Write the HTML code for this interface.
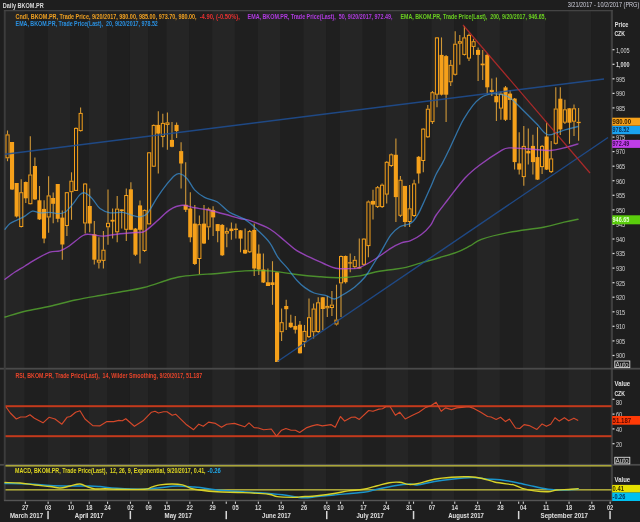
<!DOCTYPE html>
<html><head><meta charset="utf-8"><style>
html,body{margin:0;padding:0;background:#1e1e1e;width:640px;height:522px;overflow:hidden}
svg{display:block;will-change:transform}
#w{}
text{font-family:"Liberation Sans",sans-serif}
.ax{font-size:6.3px;fill:#d8d8d8}
.axl{font-size:6.3px;fill:#e0e0e0;font-weight:bold}
.bx{font-size:6.4px;font-weight:bold}
.xl{font-size:6.4px;fill:#d8d8d8;font-weight:bold}
.ml{font-size:6.6px;fill:#e0e0e0;font-weight:bold}
.lg{font-size:6.6px;font-weight:bold}
.lgn{font-size:6.6px}
</style></head><body><div id="w">
<svg width="640" height="522" viewBox="0 0 640 522">
<rect width="640" height="522" fill="#1e1e1e"/>
<rect x="5" y="11" width="19.8" height="490" fill="#252525"/>
<rect x="24.8" y="11" width="22.8" height="490" fill="#1f1f1f"/>
<rect x="47.6" y="11" width="22.8" height="490" fill="#252525"/>
<rect x="70.5" y="11" width="18.3" height="490" fill="#1f1f1f"/>
<rect x="88.7" y="11" width="18.3" height="490" fill="#252525"/>
<rect x="107" y="11" width="22.8" height="490" fill="#1f1f1f"/>
<rect x="129.9" y="11" width="18.3" height="490" fill="#252525"/>
<rect x="148.1" y="11" width="18.3" height="490" fill="#1f1f1f"/>
<rect x="166.4" y="11" width="22.8" height="490" fill="#252525"/>
<rect x="189.3" y="11" width="22.8" height="490" fill="#1f1f1f"/>
<rect x="212.1" y="11" width="22.8" height="490" fill="#252525"/>
<rect x="234.9" y="11" width="22.8" height="490" fill="#1f1f1f"/>
<rect x="257.8" y="11" width="22.8" height="490" fill="#252525"/>
<rect x="280.6" y="11" width="22.8" height="490" fill="#1f1f1f"/>
<rect x="303.5" y="11" width="22.8" height="490" fill="#252525"/>
<rect x="326.3" y="11" width="13.7" height="490" fill="#1f1f1f"/>
<rect x="340" y="11" width="22.8" height="490" fill="#252525"/>
<rect x="362.9" y="11" width="22.8" height="490" fill="#1f1f1f"/>
<rect x="385.7" y="11" width="22.8" height="490" fill="#252525"/>
<rect x="408.6" y="11" width="22.8" height="490" fill="#1f1f1f"/>
<rect x="431.4" y="11" width="22.8" height="490" fill="#252525"/>
<rect x="454.2" y="11" width="22.8" height="490" fill="#1f1f1f"/>
<rect x="477.1" y="11" width="22.8" height="490" fill="#252525"/>
<rect x="499.9" y="11" width="22.8" height="490" fill="#1f1f1f"/>
<rect x="522.8" y="11" width="22.8" height="490" fill="#252525"/>
<rect x="545.6" y="11" width="22.8" height="490" fill="#1f1f1f"/>
<rect x="568.5" y="11" width="22.8" height="490" fill="#252525"/>
<rect x="591.3" y="11" width="18.3" height="490" fill="#1f1f1f"/>
<rect x="609.6" y="11" width="2.4" height="490" fill="#252525"/>
<rect x="0" y="367.8" width="640" height="1.8" fill="#4a4a4a"/>
<rect x="0" y="463.9" width="640" height="1.8" fill="#4a4a4a"/>
<rect x="3.8" y="10" width="1.9" height="491" fill="#3c3c3c"/>
<rect x="4" y="10" width="608.5" height="1.3" fill="#444"/>
<rect x="611.3" y="10" width="1.4" height="491.2" fill="#4a4a4a"/>
<rect x="4" y="499.8" width="608.5" height="1.4" fill="#555"/>
<rect x="612.5" y="354.9" width="2" height="1.2" fill="#ddd"/>
<rect x="612.5" y="340.3" width="2" height="1.2" fill="#ddd"/>
<rect x="612.5" y="325.7" width="2" height="1.2" fill="#ddd"/>
<rect x="612.5" y="311.2" width="2" height="1.2" fill="#ddd"/>
<rect x="612.5" y="296.6" width="2" height="1.2" fill="#ddd"/>
<rect x="612.5" y="282.1" width="2" height="1.2" fill="#ddd"/>
<rect x="612.5" y="267.5" width="2" height="1.2" fill="#ddd"/>
<rect x="612.5" y="252.9" width="2" height="1.2" fill="#ddd"/>
<rect x="612.5" y="238.4" width="2" height="1.2" fill="#ddd"/>
<rect x="612.5" y="223.8" width="2" height="1.2" fill="#ddd"/>
<rect x="612.5" y="209.3" width="2" height="1.2" fill="#ddd"/>
<rect x="612.5" y="194.7" width="2" height="1.2" fill="#ddd"/>
<rect x="612.5" y="180.1" width="2" height="1.2" fill="#ddd"/>
<rect x="612.5" y="165.6" width="2" height="1.2" fill="#ddd"/>
<rect x="612.5" y="151" width="2" height="1.2" fill="#ddd"/>
<rect x="612.5" y="136.5" width="2" height="1.2" fill="#ddd"/>
<rect x="612.5" y="121.9" width="2" height="1.2" fill="#ddd"/>
<rect x="612.5" y="107.3" width="2" height="1.2" fill="#ddd"/>
<rect x="612.5" y="92.8" width="2" height="1.2" fill="#ddd"/>
<rect x="612.5" y="78.2" width="2" height="1.2" fill="#ddd"/>
<rect x="612.5" y="63.7" width="2" height="1.2" fill="#ddd"/>
<rect x="612.5" y="49.1" width="2" height="1.2" fill="#ddd"/>
<text x="615.9" y="358.3" class="ax" textLength="9.2" lengthAdjust="spacingAndGlyphs">900</text>
<text x="615.9" y="343.7" class="ax" textLength="9.2" lengthAdjust="spacingAndGlyphs">905</text>
<text x="615.9" y="329.1" class="ax" textLength="9.2" lengthAdjust="spacingAndGlyphs">910</text>
<text x="615.9" y="314.6" class="ax" textLength="9.2" lengthAdjust="spacingAndGlyphs">915</text>
<text x="615.9" y="300" class="ax" textLength="9.2" lengthAdjust="spacingAndGlyphs">920</text>
<text x="615.9" y="285.5" class="ax" textLength="9.2" lengthAdjust="spacingAndGlyphs">925</text>
<text x="615.9" y="270.9" class="ax" textLength="9.2" lengthAdjust="spacingAndGlyphs">930</text>
<text x="615.9" y="256.3" class="ax" textLength="9.2" lengthAdjust="spacingAndGlyphs">935</text>
<text x="615.9" y="241.8" class="ax" textLength="9.2" lengthAdjust="spacingAndGlyphs">940</text>
<text x="615.9" y="227.2" class="ax" textLength="9.2" lengthAdjust="spacingAndGlyphs">945</text>
<text x="615.9" y="212.7" class="ax" textLength="9.2" lengthAdjust="spacingAndGlyphs">950</text>
<text x="615.9" y="198.1" class="ax" textLength="9.2" lengthAdjust="spacingAndGlyphs">955</text>
<text x="615.9" y="183.5" class="ax" textLength="9.2" lengthAdjust="spacingAndGlyphs">960</text>
<text x="615.9" y="169" class="ax" textLength="9.2" lengthAdjust="spacingAndGlyphs">965</text>
<text x="615.9" y="154.4" class="ax" textLength="9.2" lengthAdjust="spacingAndGlyphs">970</text>
<text x="615.9" y="139.9" class="ax" textLength="9.2" lengthAdjust="spacingAndGlyphs">975</text>
<text x="615.9" y="125.3" class="ax" textLength="9.2" lengthAdjust="spacingAndGlyphs">980</text>
<text x="615.9" y="110.7" class="ax" textLength="9.2" lengthAdjust="spacingAndGlyphs">985</text>
<text x="615.9" y="96.2" class="ax" textLength="9.2" lengthAdjust="spacingAndGlyphs">990</text>
<text x="615.9" y="81.6" class="ax" textLength="9.2" lengthAdjust="spacingAndGlyphs">995</text>
<text x="615.9" y="67.1" class="ax" textLength="13.8" lengthAdjust="spacingAndGlyphs" font-weight="bold">1,000</text>
<text x="615.9" y="52.5" class="ax" textLength="13.8" lengthAdjust="spacingAndGlyphs">1,005</text>
<line x1="7.5" y1="130.5" x2="7.5" y2="134.4" stroke="#d09838" stroke-width="1.1"/>
<line x1="7.5" y1="158.3" x2="7.5" y2="161.2" stroke="#d09838" stroke-width="1.1"/>
<rect x="6" y="134.9" width="3.1" height="22.9" fill="none" stroke="#f5a01a" stroke-width="1"/>
<line x1="12.1" y1="142" x2="12.1" y2="190" stroke="#d09838" stroke-width="1.1"/>
<rect x="10" y="142" width="4.1" height="47.5" fill="#f5a01a"/>
<line x1="16.6" y1="183" x2="16.6" y2="217.5" stroke="#d09838" stroke-width="1.1"/>
<rect x="14.6" y="183" width="4.1" height="33.5" fill="#f5a01a"/>
<line x1="21.2" y1="179.3" x2="21.2" y2="192.2" stroke="#d09838" stroke-width="1.1"/>
<line x1="21.2" y1="227" x2="21.2" y2="227.5" stroke="#d09838" stroke-width="1.1"/>
<rect x="19.7" y="192.7" width="3.1" height="33.8" fill="none" stroke="#f5a01a" stroke-width="1"/>
<line x1="25.8" y1="181.5" x2="25.8" y2="203" stroke="#d09838" stroke-width="1.1"/>
<rect x="23.7" y="182" width="4.1" height="16.3" fill="#f5a01a"/>
<line x1="30.3" y1="136.3" x2="30.3" y2="174.5" stroke="#d09838" stroke-width="1.1"/>
<line x1="30.3" y1="204.2" x2="30.3" y2="204.5" stroke="#d09838" stroke-width="1.1"/>
<rect x="28.8" y="175" width="3.1" height="28.7" fill="none" stroke="#f5a01a" stroke-width="1"/>
<line x1="34.9" y1="157.4" x2="34.9" y2="200" stroke="#d09838" stroke-width="1.1"/>
<rect x="32.9" y="166" width="4.1" height="33.4" fill="#f5a01a"/>
<line x1="39.5" y1="186" x2="39.5" y2="220" stroke="#d09838" stroke-width="1.1"/>
<rect x="37.4" y="200.3" width="4.1" height="19.1" fill="#f5a01a"/>
<line x1="44.1" y1="200.2" x2="44.1" y2="243.3" stroke="#d09838" stroke-width="1.1"/>
<rect x="42" y="208.9" width="4.1" height="29.6" fill="#f5a01a"/>
<line x1="48.6" y1="176.3" x2="48.6" y2="195.4" stroke="#d09838" stroke-width="1.1"/>
<line x1="48.6" y1="217.5" x2="48.6" y2="232.8" stroke="#d09838" stroke-width="1.1"/>
<rect x="47.1" y="195.9" width="3.1" height="21.1" fill="none" stroke="#f5a01a" stroke-width="1"/>
<line x1="53.2" y1="192.5" x2="53.2" y2="223.3" stroke="#d09838" stroke-width="1.1"/>
<rect x="51.1" y="198" width="4.1" height="5.8" fill="#f5a01a"/>
<line x1="57.8" y1="184" x2="57.8" y2="222.3" stroke="#d09838" stroke-width="1.1"/>
<rect x="55.7" y="184" width="4.1" height="34.8" fill="#f5a01a"/>
<line x1="62.3" y1="210.5" x2="62.3" y2="259.7" stroke="#d09838" stroke-width="1.1"/>
<rect x="60.3" y="217.6" width="4.1" height="26.9" fill="#f5a01a"/>
<line x1="66.9" y1="192" x2="66.9" y2="192.2" stroke="#d09838" stroke-width="1.1"/>
<line x1="66.9" y1="226" x2="66.9" y2="236" stroke="#d09838" stroke-width="1.1"/>
<rect x="65.3" y="192.7" width="3.1" height="32.8" fill="none" stroke="#f5a01a" stroke-width="1"/>
<line x1="71.5" y1="172.3" x2="71.5" y2="180.7" stroke="#d09838" stroke-width="1.1"/>
<line x1="71.5" y1="192.2" x2="71.5" y2="219.8" stroke="#d09838" stroke-width="1.1"/>
<rect x="69.9" y="181.2" width="3.1" height="10.5" fill="none" stroke="#f5a01a" stroke-width="1"/>
<line x1="76" y1="127.5" x2="76" y2="127.9" stroke="#d09838" stroke-width="1.1"/>
<line x1="76" y1="190.9" x2="76" y2="191" stroke="#d09838" stroke-width="1.1"/>
<rect x="74.5" y="128.4" width="3.1" height="62" fill="none" stroke="#f5a01a" stroke-width="1"/>
<line x1="80.6" y1="107.4" x2="80.6" y2="112.9" stroke="#d09838" stroke-width="1.1"/>
<line x1="80.6" y1="131.1" x2="80.6" y2="131.5" stroke="#d09838" stroke-width="1.1"/>
<rect x="79.1" y="113.4" width="3.1" height="17.2" fill="none" stroke="#f5a01a" stroke-width="1"/>
<line x1="85.2" y1="183" x2="85.2" y2="183.5" stroke="#d09838" stroke-width="1.1"/>
<line x1="85.2" y1="223.5" x2="85.2" y2="233.5" stroke="#d09838" stroke-width="1.1"/>
<rect x="83.6" y="184" width="3.1" height="39" fill="none" stroke="#f5a01a" stroke-width="1"/>
<line x1="89.7" y1="188.4" x2="89.7" y2="232.3" stroke="#d09838" stroke-width="1.1"/>
<rect x="87.7" y="206" width="4.1" height="17.5" fill="#f5a01a"/>
<line x1="94.3" y1="221" x2="94.3" y2="264.6" stroke="#d09838" stroke-width="1.1"/>
<rect x="92.3" y="234.3" width="4.1" height="25.4" fill="#f5a01a"/>
<line x1="98.9" y1="237.2" x2="98.9" y2="259.7" stroke="#d09838" stroke-width="1.1"/>
<line x1="98.9" y1="262.6" x2="98.9" y2="268.4" stroke="#d09838" stroke-width="1.1"/>
<rect x="97.3" y="260.2" width="3.1" height="1.9" fill="none" stroke="#f5a01a" stroke-width="1"/>
<line x1="103.4" y1="231" x2="103.4" y2="249.7" stroke="#d09838" stroke-width="1.1"/>
<line x1="103.4" y1="260.9" x2="103.4" y2="268.4" stroke="#d09838" stroke-width="1.1"/>
<rect x="101.9" y="250.2" width="3.1" height="10.2" fill="none" stroke="#f5a01a" stroke-width="1"/>
<line x1="108" y1="189.6" x2="108" y2="222.8" stroke="#d09838" stroke-width="1.1"/>
<line x1="108" y1="227.3" x2="108" y2="244.7" stroke="#d09838" stroke-width="1.1"/>
<rect x="106.5" y="223.3" width="3.1" height="3.5" fill="none" stroke="#f5a01a" stroke-width="1"/>
<line x1="112.6" y1="208.6" x2="112.6" y2="238.5" stroke="#d09838" stroke-width="1.1"/>
<rect x="110.5" y="219.8" width="4.1" height="1.8" fill="#f5a01a"/>
<line x1="117.2" y1="195.9" x2="117.2" y2="208.6" stroke="#d09838" stroke-width="1.1"/>
<line x1="117.2" y1="232.3" x2="117.2" y2="242.2" stroke="#d09838" stroke-width="1.1"/>
<rect x="115.6" y="209.1" width="3.1" height="22.7" fill="none" stroke="#f5a01a" stroke-width="1"/>
<line x1="121.7" y1="209" x2="121.7" y2="209.4" stroke="#d09838" stroke-width="1.1"/>
<line x1="121.7" y1="211.1" x2="121.7" y2="228.5" stroke="#d09838" stroke-width="1.1"/>
<rect x="120.2" y="209.9" width="3.1" height="0.7" fill="none" stroke="#f5a01a" stroke-width="1"/>
<line x1="126.3" y1="188.4" x2="126.3" y2="195" stroke="#d09838" stroke-width="1.1"/>
<line x1="126.3" y1="229.8" x2="126.3" y2="241" stroke="#d09838" stroke-width="1.1"/>
<rect x="124.7" y="195.5" width="3.1" height="33.8" fill="none" stroke="#f5a01a" stroke-width="1"/>
<line x1="130.9" y1="182.3" x2="130.9" y2="230" stroke="#d09838" stroke-width="1.1"/>
<rect x="128.8" y="189.3" width="4.1" height="40.5" fill="#f5a01a"/>
<line x1="135.4" y1="228" x2="135.4" y2="256" stroke="#d09838" stroke-width="1.1"/>
<rect x="133.4" y="228.6" width="4.1" height="26.1" fill="#f5a01a"/>
<line x1="140" y1="200.4" x2="140" y2="263.4" stroke="#d09838" stroke-width="1.1"/>
<rect x="138" y="205.4" width="4.1" height="24.4" fill="#f5a01a"/>
<line x1="144.6" y1="209.5" x2="144.6" y2="209.9" stroke="#d09838" stroke-width="1.1"/>
<line x1="144.6" y1="251" x2="144.6" y2="252" stroke="#d09838" stroke-width="1.1"/>
<rect x="143" y="210.4" width="3.1" height="40.1" fill="none" stroke="#f5a01a" stroke-width="1"/>
<line x1="149.1" y1="152" x2="149.1" y2="152.3" stroke="#d09838" stroke-width="1.1"/>
<line x1="149.1" y1="224.4" x2="149.1" y2="224.5" stroke="#d09838" stroke-width="1.1"/>
<rect x="147.6" y="152.8" width="3.1" height="71.1" fill="none" stroke="#f5a01a" stroke-width="1"/>
<line x1="153.7" y1="124.5" x2="153.7" y2="124.9" stroke="#d09838" stroke-width="1.1"/>
<line x1="153.7" y1="166.7" x2="153.7" y2="167" stroke="#d09838" stroke-width="1.1"/>
<rect x="152.2" y="125.4" width="3.1" height="40.8" fill="none" stroke="#f5a01a" stroke-width="1"/>
<line x1="158.3" y1="111.2" x2="158.3" y2="173.5" stroke="#d09838" stroke-width="1.1"/>
<rect x="156.2" y="124.9" width="4.1" height="8.7" fill="#f5a01a"/>
<line x1="162.8" y1="113.7" x2="162.8" y2="122.9" stroke="#d09838" stroke-width="1.1"/>
<line x1="162.8" y1="136.9" x2="162.8" y2="147.3" stroke="#d09838" stroke-width="1.1"/>
<rect x="161.3" y="123.4" width="3.1" height="13" fill="none" stroke="#f5a01a" stroke-width="1"/>
<line x1="167.4" y1="112.5" x2="167.4" y2="122.4" stroke="#d09838" stroke-width="1.1"/>
<line x1="167.4" y1="124.9" x2="167.4" y2="149.8" stroke="#d09838" stroke-width="1.1"/>
<rect x="165.9" y="122.9" width="3.1" height="1.5" fill="none" stroke="#f5a01a" stroke-width="1"/>
<line x1="172" y1="121.9" x2="172" y2="147.3" stroke="#d09838" stroke-width="1.1"/>
<rect x="169.9" y="139.9" width="4.1" height="6.9" fill="#f5a01a"/>
<line x1="176.6" y1="122.4" x2="176.6" y2="138" stroke="#d09838" stroke-width="1.1"/>
<rect x="174.5" y="124.9" width="4.1" height="6.2" fill="#f5a01a"/>
<line x1="181.1" y1="142.3" x2="181.1" y2="188.4" stroke="#d09838" stroke-width="1.1"/>
<rect x="179.1" y="151.1" width="4.1" height="12.4" fill="#f5a01a"/>
<line x1="185.7" y1="162.3" x2="185.7" y2="212" stroke="#d09838" stroke-width="1.1"/>
<rect x="183.6" y="204.8" width="4.1" height="5" fill="#f5a01a"/>
<line x1="190.3" y1="192.3" x2="190.3" y2="242.3" stroke="#d09838" stroke-width="1.1"/>
<rect x="188.2" y="208.5" width="4.1" height="28.8" fill="#f5a01a"/>
<line x1="194.8" y1="204.9" x2="194.8" y2="265" stroke="#d09838" stroke-width="1.1"/>
<rect x="192.8" y="223.6" width="4.1" height="40.4" fill="#f5a01a"/>
<line x1="199.4" y1="215.5" x2="199.4" y2="224.2" stroke="#d09838" stroke-width="1.1"/>
<line x1="199.4" y1="259" x2="199.4" y2="274" stroke="#d09838" stroke-width="1.1"/>
<rect x="197.8" y="224.7" width="3.1" height="33.8" fill="none" stroke="#f5a01a" stroke-width="1"/>
<line x1="204" y1="205" x2="204" y2="244" stroke="#d09838" stroke-width="1.1"/>
<rect x="201.9" y="223.6" width="4.1" height="19.9" fill="#f5a01a"/>
<line x1="208.5" y1="207.5" x2="208.5" y2="208.7" stroke="#d09838" stroke-width="1.1"/>
<line x1="208.5" y1="227.4" x2="208.5" y2="239.8" stroke="#d09838" stroke-width="1.1"/>
<rect x="207" y="209.2" width="3.1" height="17.7" fill="none" stroke="#f5a01a" stroke-width="1"/>
<line x1="213.1" y1="206.2" x2="213.1" y2="236" stroke="#d09838" stroke-width="1.1"/>
<rect x="211.1" y="209.9" width="4.1" height="7.5" fill="#f5a01a"/>
<line x1="217.7" y1="224" x2="217.7" y2="242.3" stroke="#d09838" stroke-width="1.1"/>
<rect x="215.6" y="224.1" width="4.1" height="7" fill="#f5a01a"/>
<line x1="222.2" y1="224" x2="222.2" y2="256" stroke="#d09838" stroke-width="1.1"/>
<rect x="220.2" y="224.9" width="4.1" height="30.4" fill="#f5a01a"/>
<line x1="226.8" y1="227.4" x2="226.8" y2="231.1" stroke="#d09838" stroke-width="1.1"/>
<line x1="226.8" y1="233.6" x2="226.8" y2="247.3" stroke="#d09838" stroke-width="1.1"/>
<rect x="225.3" y="231.6" width="3.1" height="1.5" fill="none" stroke="#f5a01a" stroke-width="1"/>
<line x1="231.4" y1="222.4" x2="231.4" y2="239.8" stroke="#d09838" stroke-width="1.1"/>
<rect x="229.3" y="228.6" width="4.1" height="2.5" fill="#f5a01a"/>
<line x1="235.9" y1="223.6" x2="235.9" y2="238.6" stroke="#d09838" stroke-width="1.1"/>
<rect x="233.9" y="228.6" width="4.1" height="1.4" fill="#f5a01a"/>
<line x1="240.5" y1="230" x2="240.5" y2="252.3" stroke="#d09838" stroke-width="1.1"/>
<rect x="238.5" y="230.3" width="4.1" height="8.3" fill="#f5a01a"/>
<line x1="245.1" y1="228.6" x2="245.1" y2="254" stroke="#d09838" stroke-width="1.1"/>
<rect x="243" y="249.8" width="4.1" height="3.7" fill="#f5a01a"/>
<line x1="249.7" y1="230" x2="249.7" y2="231.1" stroke="#d09838" stroke-width="1.1"/>
<line x1="249.7" y1="252.3" x2="249.7" y2="253" stroke="#d09838" stroke-width="1.1"/>
<rect x="248.1" y="231.6" width="3.1" height="20.2" fill="none" stroke="#f5a01a" stroke-width="1"/>
<line x1="254.2" y1="223.6" x2="254.2" y2="276" stroke="#d09838" stroke-width="1.1"/>
<rect x="252.2" y="229.9" width="4.1" height="38.6" fill="#f5a01a"/>
<line x1="258.8" y1="244.5" x2="258.8" y2="275" stroke="#d09838" stroke-width="1.1"/>
<rect x="256.7" y="253.6" width="4.1" height="15.9" fill="#f5a01a"/>
<line x1="263.4" y1="253.5" x2="263.4" y2="283" stroke="#d09838" stroke-width="1.1"/>
<rect x="261.3" y="269.5" width="4.1" height="13" fill="#f5a01a"/>
<line x1="267.9" y1="268.5" x2="267.9" y2="286" stroke="#d09838" stroke-width="1.1"/>
<rect x="265.9" y="282.3" width="4.1" height="3.7" fill="#f5a01a"/>
<line x1="272.5" y1="261.2" x2="272.5" y2="304.8" stroke="#d09838" stroke-width="1.1"/>
<rect x="270.4" y="282.3" width="4.1" height="2.7" fill="#f5a01a"/>
<line x1="277.1" y1="272" x2="277.1" y2="362" stroke="#d09838" stroke-width="1.1"/>
<rect x="275" y="272.4" width="4.1" height="89.6" fill="#f5a01a"/>
<line x1="281.6" y1="308.5" x2="281.6" y2="322.2" stroke="#d09838" stroke-width="1.1"/>
<line x1="281.6" y1="332.2" x2="281.6" y2="341" stroke="#d09838" stroke-width="1.1"/>
<rect x="280.1" y="322.7" width="3.1" height="9" fill="none" stroke="#f5a01a" stroke-width="1"/>
<line x1="286.2" y1="299.8" x2="286.2" y2="330" stroke="#d09838" stroke-width="1.1"/>
<rect x="284.2" y="306" width="4.1" height="3.2" fill="#f5a01a"/>
<line x1="290.8" y1="314.7" x2="290.8" y2="328" stroke="#d09838" stroke-width="1.1"/>
<rect x="288.7" y="322.7" width="4.1" height="4.5" fill="#f5a01a"/>
<line x1="295.3" y1="316" x2="295.3" y2="333.4" stroke="#d09838" stroke-width="1.1"/>
<rect x="293.3" y="325.9" width="4.1" height="3.8" fill="#f5a01a"/>
<line x1="299.9" y1="321" x2="299.9" y2="353.5" stroke="#d09838" stroke-width="1.1"/>
<rect x="297.9" y="324.7" width="4.1" height="28.6" fill="#f5a01a"/>
<line x1="304.5" y1="325" x2="304.5" y2="330.9" stroke="#d09838" stroke-width="1.1"/>
<line x1="304.5" y1="342.1" x2="304.5" y2="347.1" stroke="#d09838" stroke-width="1.1"/>
<rect x="302.9" y="331.4" width="3.1" height="10.2" fill="none" stroke="#f5a01a" stroke-width="1"/>
<line x1="309" y1="298.5" x2="309" y2="317.2" stroke="#d09838" stroke-width="1.1"/>
<line x1="309" y1="337.1" x2="309" y2="338" stroke="#d09838" stroke-width="1.1"/>
<rect x="307.5" y="317.7" width="3.1" height="18.9" fill="none" stroke="#f5a01a" stroke-width="1"/>
<line x1="313.6" y1="303.5" x2="313.6" y2="308.5" stroke="#d09838" stroke-width="1.1"/>
<line x1="313.6" y1="332.2" x2="313.6" y2="338.4" stroke="#d09838" stroke-width="1.1"/>
<rect x="312.1" y="309" width="3.1" height="22.7" fill="none" stroke="#f5a01a" stroke-width="1"/>
<line x1="318.2" y1="297.3" x2="318.2" y2="302.3" stroke="#d09838" stroke-width="1.1"/>
<line x1="318.2" y1="332" x2="318.2" y2="333" stroke="#d09838" stroke-width="1.1"/>
<rect x="316.6" y="302.8" width="3.1" height="28.7" fill="none" stroke="#f5a01a" stroke-width="1"/>
<line x1="322.8" y1="297" x2="322.8" y2="330" stroke="#d09838" stroke-width="1.1"/>
<rect x="320.7" y="297.3" width="4.1" height="11.7" fill="#f5a01a"/>
<line x1="327.3" y1="295.9" x2="327.3" y2="305.9" stroke="#d09838" stroke-width="1.1"/>
<line x1="327.3" y1="308.3" x2="327.3" y2="317.1" stroke="#d09838" stroke-width="1.1"/>
<rect x="325.8" y="306.4" width="3.1" height="1.4" fill="none" stroke="#f5a01a" stroke-width="1"/>
<line x1="331.9" y1="290.9" x2="331.9" y2="304.6" stroke="#d09838" stroke-width="1.1"/>
<line x1="331.9" y1="308" x2="331.9" y2="316" stroke="#d09838" stroke-width="1.1"/>
<rect x="330.3" y="305.1" width="3.1" height="2.4" fill="none" stroke="#f5a01a" stroke-width="1"/>
<line x1="336.5" y1="284.7" x2="336.5" y2="319.6" stroke="#d09838" stroke-width="1.1"/>
<line x1="336.5" y1="324.5" x2="336.5" y2="325.5" stroke="#d09838" stroke-width="1.1"/>
<rect x="334.9" y="320.1" width="3.1" height="3.9" fill="none" stroke="#f5a01a" stroke-width="1"/>
<line x1="341" y1="255.5" x2="341" y2="256" stroke="#d09838" stroke-width="1.1"/>
<line x1="341" y1="283.4" x2="341" y2="317" stroke="#d09838" stroke-width="1.1"/>
<rect x="339.5" y="256.5" width="3.1" height="26.4" fill="none" stroke="#f5a01a" stroke-width="1"/>
<line x1="345.6" y1="255.5" x2="345.6" y2="283.5" stroke="#d09838" stroke-width="1.1"/>
<rect x="343.5" y="256" width="4.1" height="26.2" fill="#f5a01a"/>
<line x1="350.2" y1="253.5" x2="350.2" y2="272.2" stroke="#d09838" stroke-width="1.1"/>
<rect x="348.1" y="262.3" width="4.1" height="1.2" fill="#f5a01a"/>
<line x1="354.7" y1="256" x2="354.7" y2="259.8" stroke="#d09838" stroke-width="1.1"/>
<line x1="354.7" y1="267.2" x2="354.7" y2="268.5" stroke="#d09838" stroke-width="1.1"/>
<rect x="353.2" y="260.3" width="3.1" height="6.4" fill="none" stroke="#f5a01a" stroke-width="1"/>
<line x1="359.3" y1="238.6" x2="359.3" y2="267.2" stroke="#d09838" stroke-width="1.1"/>
<line x1="359.3" y1="268.5" x2="359.3" y2="269" stroke="#d09838" stroke-width="1.1"/>
<rect x="357.8" y="267.7" width="3.1" height="0.3" fill="none" stroke="#f5a01a" stroke-width="1"/>
<line x1="363.9" y1="238" x2="363.9" y2="238.6" stroke="#d09838" stroke-width="1.1"/>
<line x1="363.9" y1="264.8" x2="363.9" y2="265.5" stroke="#d09838" stroke-width="1.1"/>
<rect x="362.3" y="239.1" width="3.1" height="25.2" fill="none" stroke="#f5a01a" stroke-width="1"/>
<line x1="368.4" y1="200.5" x2="368.4" y2="201.5" stroke="#d09838" stroke-width="1.1"/>
<line x1="368.4" y1="246.1" x2="368.4" y2="257.3" stroke="#d09838" stroke-width="1.1"/>
<rect x="366.9" y="202" width="3.1" height="43.6" fill="none" stroke="#f5a01a" stroke-width="1"/>
<line x1="373" y1="189.7" x2="373" y2="219.6" stroke="#d09838" stroke-width="1.1"/>
<rect x="371" y="200.9" width="4.1" height="3.7" fill="#f5a01a"/>
<line x1="377.6" y1="186" x2="377.6" y2="187.2" stroke="#d09838" stroke-width="1.1"/>
<line x1="377.6" y1="207.1" x2="377.6" y2="208" stroke="#d09838" stroke-width="1.1"/>
<rect x="376" y="187.7" width="3.1" height="18.9" fill="none" stroke="#f5a01a" stroke-width="1"/>
<line x1="382.1" y1="183.5" x2="382.1" y2="184.7" stroke="#d09838" stroke-width="1.1"/>
<line x1="382.1" y1="207.1" x2="382.1" y2="208" stroke="#d09838" stroke-width="1.1"/>
<rect x="380.6" y="185.2" width="3.1" height="21.4" fill="none" stroke="#f5a01a" stroke-width="1"/>
<line x1="386.7" y1="161" x2="386.7" y2="161.8" stroke="#d09838" stroke-width="1.1"/>
<line x1="386.7" y1="194.6" x2="386.7" y2="203.4" stroke="#d09838" stroke-width="1.1"/>
<rect x="385.2" y="162.3" width="3.1" height="31.8" fill="none" stroke="#f5a01a" stroke-width="1"/>
<line x1="391.3" y1="153.5" x2="391.3" y2="154.3" stroke="#d09838" stroke-width="1.1"/>
<line x1="391.3" y1="166" x2="391.3" y2="167" stroke="#d09838" stroke-width="1.1"/>
<rect x="389.7" y="154.8" width="3.1" height="10.7" fill="none" stroke="#f5a01a" stroke-width="1"/>
<line x1="395.9" y1="138.6" x2="395.9" y2="222" stroke="#d09838" stroke-width="1.1"/>
<rect x="393.8" y="154.8" width="4.1" height="42.3" fill="#f5a01a"/>
<line x1="400.4" y1="176" x2="400.4" y2="179.7" stroke="#d09838" stroke-width="1.1"/>
<line x1="400.4" y1="215.8" x2="400.4" y2="217" stroke="#d09838" stroke-width="1.1"/>
<rect x="398.9" y="180.2" width="3.1" height="35.1" fill="none" stroke="#f5a01a" stroke-width="1"/>
<line x1="405" y1="185.9" x2="405" y2="227" stroke="#d09838" stroke-width="1.1"/>
<rect x="402.9" y="185.9" width="4.1" height="36.1" fill="#f5a01a"/>
<line x1="409.6" y1="185" x2="409.6" y2="208.3" stroke="#d09838" stroke-width="1.1"/>
<line x1="409.6" y1="222" x2="409.6" y2="227" stroke="#d09838" stroke-width="1.1"/>
<rect x="408" y="208.8" width="3.1" height="12.7" fill="none" stroke="#f5a01a" stroke-width="1"/>
<line x1="414.1" y1="179.7" x2="414.1" y2="183.4" stroke="#d09838" stroke-width="1.1"/>
<line x1="414.1" y1="216" x2="414.1" y2="217" stroke="#d09838" stroke-width="1.1"/>
<rect x="412.6" y="183.9" width="3.1" height="31.6" fill="none" stroke="#f5a01a" stroke-width="1"/>
<line x1="418.7" y1="156" x2="418.7" y2="183.4" stroke="#d09838" stroke-width="1.1"/>
<rect x="416.6" y="156.8" width="4.1" height="16.7" fill="#f5a01a"/>
<line x1="423.3" y1="128" x2="423.3" y2="128.6" stroke="#d09838" stroke-width="1.1"/>
<line x1="423.3" y1="161" x2="423.3" y2="172.2" stroke="#d09838" stroke-width="1.1"/>
<rect x="421.7" y="129.1" width="3.1" height="31.4" fill="none" stroke="#f5a01a" stroke-width="1"/>
<line x1="427.8" y1="105" x2="427.8" y2="108.7" stroke="#d09838" stroke-width="1.1"/>
<line x1="427.8" y1="137.3" x2="427.8" y2="138" stroke="#d09838" stroke-width="1.1"/>
<rect x="426.3" y="109.2" width="3.1" height="27.6" fill="none" stroke="#f5a01a" stroke-width="1"/>
<line x1="432.4" y1="91" x2="432.4" y2="92.2" stroke="#d09838" stroke-width="1.1"/>
<line x1="432.4" y1="122.1" x2="432.4" y2="124" stroke="#d09838" stroke-width="1.1"/>
<rect x="430.9" y="92.7" width="3.1" height="28.9" fill="none" stroke="#f5a01a" stroke-width="1"/>
<line x1="437" y1="37" x2="437" y2="37.4" stroke="#d09838" stroke-width="1.1"/>
<line x1="437" y1="94.7" x2="437" y2="107.2" stroke="#d09838" stroke-width="1.1"/>
<rect x="435.4" y="37.9" width="3.1" height="56.3" fill="none" stroke="#f5a01a" stroke-width="1"/>
<line x1="441.5" y1="37.4" x2="441.5" y2="95.5" stroke="#d09838" stroke-width="1.1"/>
<rect x="439.5" y="54.9" width="4.1" height="39.8" fill="#f5a01a"/>
<line x1="446.1" y1="55" x2="446.1" y2="122.1" stroke="#d09838" stroke-width="1.1"/>
<rect x="444.1" y="56.1" width="4.1" height="38.6" fill="#f5a01a"/>
<line x1="450.7" y1="60" x2="450.7" y2="64.8" stroke="#d09838" stroke-width="1.1"/>
<line x1="450.7" y1="82.3" x2="450.7" y2="86" stroke="#d09838" stroke-width="1.1"/>
<rect x="449.1" y="65.3" width="3.1" height="16.5" fill="none" stroke="#f5a01a" stroke-width="1"/>
<line x1="455.2" y1="31.2" x2="455.2" y2="43.7" stroke="#d09838" stroke-width="1.1"/>
<line x1="455.2" y1="74.8" x2="455.2" y2="75.5" stroke="#d09838" stroke-width="1.1"/>
<rect x="453.7" y="44.2" width="3.1" height="30.1" fill="none" stroke="#f5a01a" stroke-width="1"/>
<line x1="459.8" y1="34.9" x2="459.8" y2="41.2" stroke="#d09838" stroke-width="1.1"/>
<line x1="459.8" y1="43.7" x2="459.8" y2="64.8" stroke="#d09838" stroke-width="1.1"/>
<rect x="458.3" y="41.7" width="3.1" height="1.5" fill="none" stroke="#f5a01a" stroke-width="1"/>
<line x1="464.4" y1="26" x2="464.4" y2="37.4" stroke="#d09838" stroke-width="1.1"/>
<line x1="464.4" y1="54.9" x2="464.4" y2="55.5" stroke="#d09838" stroke-width="1.1"/>
<rect x="462.8" y="37.9" width="3.1" height="16.5" fill="none" stroke="#f5a01a" stroke-width="1"/>
<line x1="469" y1="33.5" x2="469" y2="34.9" stroke="#d09838" stroke-width="1.1"/>
<line x1="469" y1="58.6" x2="469" y2="61" stroke="#d09838" stroke-width="1.1"/>
<rect x="467.4" y="35.4" width="3.1" height="22.7" fill="none" stroke="#f5a01a" stroke-width="1"/>
<line x1="473.5" y1="38.7" x2="473.5" y2="41.2" stroke="#d09838" stroke-width="1.1"/>
<line x1="473.5" y1="46.9" x2="473.5" y2="54.9" stroke="#d09838" stroke-width="1.1"/>
<rect x="472" y="41.7" width="3.1" height="4.7" fill="none" stroke="#f5a01a" stroke-width="1"/>
<line x1="478.1" y1="47.4" x2="478.1" y2="81" stroke="#d09838" stroke-width="1.1"/>
<rect x="476" y="49.9" width="4.1" height="5" fill="#f5a01a"/>
<line x1="482.7" y1="49.9" x2="482.7" y2="80" stroke="#d09838" stroke-width="1.1"/>
<rect x="480.6" y="63.6" width="4.1" height="1.7" fill="#f5a01a"/>
<line x1="487.2" y1="53.5" x2="487.2" y2="94" stroke="#d09838" stroke-width="1.1"/>
<rect x="485.2" y="54.9" width="4.1" height="32.4" fill="#f5a01a"/>
<line x1="491.8" y1="78.6" x2="491.8" y2="89.9" stroke="#d09838" stroke-width="1.1"/>
<line x1="491.8" y1="92" x2="491.8" y2="96.1" stroke="#d09838" stroke-width="1.1"/>
<rect x="490.2" y="90.4" width="3.1" height="1.1" fill="none" stroke="#f5a01a" stroke-width="1"/>
<line x1="496.4" y1="77.4" x2="496.4" y2="121" stroke="#d09838" stroke-width="1.1"/>
<rect x="494.3" y="96.1" width="4.1" height="6.2" fill="#f5a01a"/>
<line x1="500.9" y1="91.5" x2="500.9" y2="93.6" stroke="#d09838" stroke-width="1.1"/>
<line x1="500.9" y1="108.6" x2="500.9" y2="119.8" stroke="#d09838" stroke-width="1.1"/>
<rect x="499.4" y="94.1" width="3.1" height="14" fill="none" stroke="#f5a01a" stroke-width="1"/>
<line x1="505.5" y1="86" x2="505.5" y2="121" stroke="#d09838" stroke-width="1.1"/>
<rect x="503.5" y="87.4" width="4.1" height="32.4" fill="#f5a01a"/>
<line x1="510.1" y1="89.9" x2="510.1" y2="120" stroke="#d09838" stroke-width="1.1"/>
<rect x="508" y="93.6" width="4.1" height="6.3" fill="#f5a01a"/>
<line x1="514.6" y1="98" x2="514.6" y2="169.6" stroke="#d09838" stroke-width="1.1"/>
<rect x="512.6" y="98.6" width="4.1" height="63.5" fill="#f5a01a"/>
<line x1="519.2" y1="132.2" x2="519.2" y2="174.6" stroke="#d09838" stroke-width="1.1"/>
<rect x="517.2" y="163.4" width="4.1" height="6.2" fill="#f5a01a"/>
<line x1="523.8" y1="126" x2="523.8" y2="145.9" stroke="#d09838" stroke-width="1.1"/>
<line x1="523.8" y1="177.1" x2="523.8" y2="185.8" stroke="#d09838" stroke-width="1.1"/>
<rect x="522.2" y="146.4" width="3.1" height="30.2" fill="none" stroke="#f5a01a" stroke-width="1"/>
<line x1="528.3" y1="128.5" x2="528.3" y2="164.6" stroke="#d09838" stroke-width="1.1"/>
<rect x="526.3" y="150.9" width="4.1" height="2.5" fill="#f5a01a"/>
<line x1="532.9" y1="134.7" x2="532.9" y2="174.6" stroke="#d09838" stroke-width="1.1"/>
<rect x="530.9" y="145.9" width="4.1" height="16.2" fill="#f5a01a"/>
<line x1="537.5" y1="127.2" x2="537.5" y2="180" stroke="#d09838" stroke-width="1.1"/>
<rect x="535.4" y="157.1" width="4.1" height="22.5" fill="#f5a01a"/>
<line x1="542.1" y1="145" x2="542.1" y2="145.9" stroke="#d09838" stroke-width="1.1"/>
<line x1="542.1" y1="167.1" x2="542.1" y2="174" stroke="#d09838" stroke-width="1.1"/>
<rect x="540.5" y="146.4" width="3.1" height="20.2" fill="none" stroke="#f5a01a" stroke-width="1"/>
<line x1="546.6" y1="122.7" x2="546.6" y2="170" stroke="#d09838" stroke-width="1.1"/>
<rect x="544.6" y="136.5" width="4.1" height="33.1" fill="#f5a01a"/>
<line x1="551.2" y1="140.9" x2="551.2" y2="158.4" stroke="#d09838" stroke-width="1.1"/>
<line x1="551.2" y1="172.1" x2="551.2" y2="173" stroke="#d09838" stroke-width="1.1"/>
<rect x="549.6" y="158.9" width="3.1" height="12.7" fill="none" stroke="#f5a01a" stroke-width="1"/>
<line x1="555.8" y1="87.2" x2="555.8" y2="108.5" stroke="#d09838" stroke-width="1.1"/>
<line x1="555.8" y1="143.8" x2="555.8" y2="144.5" stroke="#d09838" stroke-width="1.1"/>
<rect x="554.2" y="109" width="3.1" height="34.3" fill="none" stroke="#f5a01a" stroke-width="1"/>
<line x1="560.3" y1="87.2" x2="560.3" y2="135.1" stroke="#d09838" stroke-width="1.1"/>
<rect x="558.3" y="98.7" width="4.1" height="30.7" fill="#f5a01a"/>
<line x1="564.9" y1="99.7" x2="564.9" y2="109.3" stroke="#d09838" stroke-width="1.1"/>
<line x1="564.9" y1="122.7" x2="564.9" y2="124" stroke="#d09838" stroke-width="1.1"/>
<rect x="563.3" y="109.8" width="3.1" height="12.4" fill="none" stroke="#f5a01a" stroke-width="1"/>
<line x1="569.5" y1="108.3" x2="569.5" y2="143.8" stroke="#d09838" stroke-width="1.1"/>
<rect x="567.4" y="108.3" width="4.1" height="14.4" fill="#f5a01a"/>
<line x1="574" y1="104.5" x2="574" y2="108.3" stroke="#d09838" stroke-width="1.1"/>
<line x1="574" y1="121.7" x2="574" y2="136.1" stroke="#d09838" stroke-width="1.1"/>
<rect x="572.5" y="108.8" width="3.1" height="12.4" fill="none" stroke="#f5a01a" stroke-width="1"/>
<line x1="578.6" y1="107.9" x2="578.6" y2="121.8" stroke="#d09838" stroke-width="1.1"/>
<line x1="578.6" y1="123" x2="578.6" y2="140.8" stroke="#d09838" stroke-width="1.1"/>
<rect x="577.1" y="122.3" width="3.1" height="0.3" fill="none" stroke="#f5a01a" stroke-width="1"/>
<path d="M5,317 C8.3,316.1 17.5,313.1 25,311.3 C32.5,309.5 41.6,308.2 50,306.3 C58.4,304.4 67,301.8 75.3,300 C83.6,298.2 92.5,296.8 100,295.5 C107.5,294.2 112.7,293.3 120,292 C127.3,290.7 135.9,289.5 143.8,287.5 C151.7,285.5 161.5,281.8 167.5,280 C173.5,278.2 175.5,277.6 180,276.8 C184.5,276 187.9,275.7 194.6,275.1 C201.3,274.5 211.6,273.9 220,273.2 C228.4,272.5 236.6,271.3 244.9,270.9 C253.2,270.5 261.5,270.3 269.8,270.9 C278.1,271.4 286.4,273.2 294.7,274.2 C303,275.2 312.1,276.1 319.6,276.7 C327.1,277.3 332.9,277.8 339.6,277.7 C346.3,277.6 354.1,276.8 360,275.9 C365.9,274.9 370.2,273 375.3,272 C380.4,271 385.6,270.5 390.7,269.7 C395.8,268.9 400.9,268.5 406,267.4 C411.1,266.2 415.6,264.4 421.3,262.8 C427,261.2 434,259.3 440,257.5 C446,255.7 452.1,254 457.1,252.1 C462.1,250.2 465.9,248 470,245.9 C474.1,243.8 474.9,241.6 481.4,239.3 C487.9,237.1 498.7,234.4 509,232.4 C519.3,230.4 534.2,228.9 543.4,227.2 C552.6,225.5 558.3,223.4 564.1,222.1 C569.9,220.8 575.7,219.8 578,219.3" fill="none" stroke="#5cbc30" stroke-width="1.4" stroke-linecap="round" stroke-opacity="0.7"/>
<path d="M5,279.3 C6.7,278.1 11.7,274.2 15,272 C18.3,269.8 21.3,268.3 25,266 C28.7,263.7 33.3,260.7 37.4,258.4 C41.5,256.1 46,253.5 49.8,252.2 C53.6,250.9 56.8,251.8 60,250.8 C63.2,249.8 65.4,248.6 69.2,246 C73,243.4 79.4,237.4 83,235.5 C86.6,233.6 87.3,234.4 90.6,234.5 C93.9,234.6 98,236.2 102.9,236.1 C107.8,236 114.6,234.3 120,233.7 C125.4,233.1 131.2,232.9 135.3,232.5 C139.4,232.1 140.7,233.5 144.5,231.4 C148.3,229.3 154.1,223.5 158.3,219.9 C162.5,216.3 165.7,212.2 169.7,209.8 C173.7,207.4 178,205.6 182.2,205.3 C186.3,205 190.4,207.1 194.6,207.8 C198.8,208.6 202,208.7 207.1,209.8 C212.2,210.9 219.5,212.9 225,214.3 C230.5,215.8 235.6,217.4 239.9,218.5 C244.2,219.6 245.9,219.1 250.9,220.8 C255.9,222.6 264.1,225.6 269.8,229 C275.5,232.4 280.5,237.4 285,241 C289.5,244.6 292.6,248 296.8,250.7 C301,253.4 305.7,255.3 310.2,257.4 C314.7,259.5 319.4,261.7 323.6,263.5 C327.9,265.3 331,267.3 335.7,268.2 C340.4,269.1 347.9,268.7 352,268.6 C356.1,268.5 356.1,269 360,267.4 C363.9,265.8 370.2,262.2 375.3,259 C380.4,255.8 386.4,251 390.7,248.3 C395,245.6 398.1,244.2 401.4,242.9 C404.7,241.6 407.3,242 410.6,240.6 C413.9,239.2 418,237.1 421.3,234.5 C424.6,231.9 428,228.6 430.5,225.3 C433,222.1 433.3,219.2 436.2,215 C439.1,210.8 442.8,206.2 447.6,200 C452.4,193.8 459.6,183.8 465,178 C470.4,172.2 474,169.4 479.8,165 C485.6,160.6 495.1,154.2 500,151.3 C504.9,148.5 504.1,148.3 509,147.9 C514,147.5 522.8,148.6 529.7,149 C536.6,149.4 544.6,150.7 550.3,150.5 C556,150.3 559.5,149 564.1,147.9 C568.7,146.8 575.7,144.6 578,143.9" fill="none" stroke="#c050f0" stroke-width="1.4" stroke-linecap="round" stroke-opacity="0.7"/>
<path d="M5,229.3 C5.8,228.3 7.9,225.1 10,223.5 C12.1,221.9 14.9,221 17.4,219.8 C19.9,218.6 22.4,217.6 24.9,216.1 C27.4,214.6 29.9,211.6 32.4,211.1 C34.9,210.6 37,212.6 39.9,212.8 C42.8,213 46.9,212.2 49.8,212.3 C52.7,212.4 54.8,213.6 57.3,213.6 C59.8,213.6 62.3,213.8 64.8,212.3 C67.3,210.9 69.7,207.8 72.2,204.9 C74.7,202 77.6,196.9 79.7,194.9 C81.8,192.9 82.6,192.3 84.7,192.9 C86.8,193.5 89.7,196 92.2,198.6 C94.8,201.2 97,206.2 100,208.6 C103,211 106.3,212.2 110,212.8 C113.7,213.4 118.7,211.9 122.4,212.3 C126.1,212.7 129.5,214.6 132.4,215.3 C135.3,216.1 137.4,217.1 139.9,216.8 C142.4,216.5 144.4,216.7 147.3,213.5 C150.2,210.3 154,202.4 157.3,197.4 C160.6,192.4 164.3,187.4 167.2,183.7 C170.1,180 172.6,177.1 174.7,175.4 C176.8,173.7 177.6,173.1 179.7,173.7 C181.8,174.2 184.7,176 187.2,178.7 C189.7,181.4 191.7,186.8 194.6,189.9 C197.5,193 200.8,195.4 204.6,197.4 C208.3,199.4 212.9,199.3 217.1,201.8 C221.2,204.3 224.9,209.4 229.5,212.3 C234.1,215.2 240.2,216.5 244.9,219.4 C249.6,222.3 253.2,226 257.4,229.9 C261.5,233.8 266.4,238.2 269.8,242.8 C273.2,247.4 275.1,253.2 278,257.4 C280.9,261.6 284.3,264.4 287.4,268.2 C290.5,272 293.9,277 296.8,280.2 C299.7,283.4 302,285.5 304.9,287.6 C307.8,289.7 310.6,291.7 314.2,293 C317.8,294.3 322.9,294.6 326.3,295.6 C329.7,296.6 331.7,299.1 334.3,299 C336.9,298.9 338.6,297.3 342,295.3 C345.4,293.3 351,289.9 354.8,286.9 C358.6,283.8 362.1,280.5 365,277 C367.9,273.5 369.8,269.8 372.3,265.9 C374.8,262 376.8,258.7 379.9,253.6 C383,248.5 387.4,239.7 390.7,235.2 C394,230.7 397,228.6 399.8,226.8 C402.6,225 405.3,225.4 407.5,224.5 C409.7,223.6 411.2,223.3 413,221.5 C414.8,219.7 416.3,217.5 418.3,213.9 C420.3,210.3 422.6,204.8 424.8,200 C427,195.2 429.4,189.7 431.3,185.4 C433.2,181.1 434.3,177.8 436.2,174 C438.1,170.2 440.5,166.7 442.7,162.6 C444.9,158.5 446.6,154.9 449.2,149.5 C451.8,144.1 455.8,135.1 458.2,130 C460.6,124.9 461.2,123.2 463.7,119.1 C466.1,115 470.2,108.8 472.9,105.3 C475.6,101.8 477.5,100.1 479.8,98.4 C482.1,96.7 484,95.7 486.7,94.9 C489.4,94.1 492.2,93.4 495.9,93.8 C499.6,94.2 504.5,94.5 509,97.2 C513.5,99.9 518.2,105.6 522.8,110 C527.4,114.4 532.6,119.7 536.6,123.8 C540.6,127.9 543.6,133 547,134.5 C550.4,136 554,133.4 557,132.6 C560,131.8 561.5,130.8 565,129.8 C568.5,128.8 575.8,127 578,126.5" fill="none" stroke="#3ca0f0" stroke-width="1.3" stroke-linecap="round" stroke-opacity="0.65"/>
<line x1="5" y1="154.2" x2="604" y2="79" stroke="#1f5096" stroke-width="1.4" stroke-opacity="0.85"/>
<line x1="277.5" y1="361.5" x2="608" y2="137.5" stroke="#1f5096" stroke-width="1.4" stroke-opacity="0.85"/>
<line x1="463" y1="25" x2="590" y2="173" stroke="#c02a2a" stroke-width="1.2" stroke-opacity="0.85"/>
<rect x="612.2" y="117.7" width="28" height="8" fill="#f7a21b"/>
<text x="612.6" y="123.9" class="bx" fill="#3a2200" textLength="18.4" lengthAdjust="spacingAndGlyphs">980.00</text>
<rect x="612.2" y="126" width="28" height="8.2" fill="#1aa3f0"/>
<text x="612.6" y="132.3" class="bx" fill="#06305a" textLength="16.6" lengthAdjust="spacingAndGlyphs">978.52</text>
<rect x="612.2" y="139.9" width="28" height="8" fill="#c03ee8"/>
<text x="612.6" y="146.1" class="bx" fill="#3a0a50" textLength="16.6" lengthAdjust="spacingAndGlyphs">972.49</text>
<rect x="612.2" y="215.3" width="28" height="9" fill="#5acc0c"/>
<text x="612.6" y="222" class="bx" fill="#e0ffd0" textLength="16.6" lengthAdjust="spacingAndGlyphs">946.65</text>
<rect x="614.8" y="361" width="15" height="6.6" fill="none" stroke="#ddd" stroke-width="0.9"/>
<text x="615.6" y="366.5" class="ax" fill="#fff">Auto</text>
<text x="614.8" y="27.1" class="axl" textLength="13.6" lengthAdjust="spacingAndGlyphs">Price</text>
<text x="614.4" y="36.1" class="axl" textLength="10.5" lengthAdjust="spacingAndGlyphs">CZK</text>
<rect x="5.5" y="405.2" width="606" height="2" fill="#c43a1c"/>
<rect x="5.5" y="435.2" width="606" height="2" fill="#c43a1c"/>
<polyline points="6,407 10.3,413 16.3,419 20.6,417 25.8,417 30,414.8 34.4,418.2 43,422.8 49,417.3 55,419 61.9,424.2 67,417.3 70.4,416.5 75.6,412.2 80,410.8 85,419 92.8,425.6 99.7,425.9 106.9,421.6 113.7,421.6 118.9,420.4 122.3,420.8 125.8,418.7 134.4,426.3 143,420.8 151.5,412.2 155,411.3 158.4,413 163.6,411.7 167,411.7 172.2,415.3 175.6,414.2 185.9,424.2 193.6,429.7 198.8,424.2 203.3,426.3 208.6,422.1 215.5,423.4 221.5,427.3 226.6,424.2 234.4,423.4 244.7,426.8 249,422.8 254.1,427.6 258.4,428 263.6,429.7 271.3,429 276.5,436.2 281.6,430.2 285.9,428.5 291.1,430.2 295.4,430.2 299.7,432.5 306.9,427.6 312,425.9 317.2,424.6 322.3,425.9 330.9,424.6 335.2,427.3 340.4,416.5 344.7,421.1 351.5,417.3 355,417 359.3,419.4 368.7,410.5 373,411.3 379,409.1 382.5,408.7 385.9,406.7 390.2,406.7 395.4,415.3 399.7,412.2 405.2,419 412,415.6 418.9,412.2 425.8,407.4 430.9,405.7 436.1,402.2 441.2,411.3 445.5,407.9 451.5,409.6 456.7,407.9 461.9,407.4 468.7,406.7 473.9,408.4 480.8,412.2 487.6,416.5 491.1,417 496.2,419.4 500.5,417.3 505.5,421.6 509.5,419 515.5,428 519.8,428.5 524.1,424.6 529.2,425.6 536.9,429.4 542.1,423.9 546.4,426.3 550.7,424.2 555,417.7 559.3,421.1 564.4,417.7 568.7,420.8 573.9,418.2 578.2,420.4" fill="none" stroke="#d4482a" stroke-width="1.15" stroke-linejoin="round" />
<rect x="612.5" y="443.1" width="2" height="1.2" fill="#ddd"/>
<text x="615.9" y="446.5" class="ax" textLength="6.2" lengthAdjust="spacingAndGlyphs">20</text>
<rect x="612.5" y="428.3" width="2" height="1.2" fill="#ddd"/>
<text x="615.9" y="431.7" class="ax" textLength="6.2" lengthAdjust="spacingAndGlyphs">40</text>
<rect x="612.5" y="413.5" width="2" height="1.2" fill="#ddd"/>
<text x="615.9" y="416.9" class="ax" textLength="6.2" lengthAdjust="spacingAndGlyphs">60</text>
<rect x="612.5" y="398.7" width="2" height="1.2" fill="#ddd"/>
<text x="615.9" y="405.1" class="ax" textLength="6.2" lengthAdjust="spacingAndGlyphs">80</text>
<rect x="612.2" y="416" width="28" height="8.7" fill="#ff3a06"/>
<text x="612.6" y="422.6" class="bx" fill="#5a0800" textLength="18.6" lengthAdjust="spacingAndGlyphs">51.187</text>
<text x="614.5" y="386.1" class="axl" textLength="15.6" lengthAdjust="spacingAndGlyphs">Value</text>
<text x="614.4" y="395.7" class="axl" textLength="10.5" lengthAdjust="spacingAndGlyphs">CZK</text>
<rect x="614.8" y="457.3" width="15" height="6.6" fill="none" stroke="#ddd" stroke-width="0.9"/>
<text x="615.6" y="462.8" class="ax" fill="#fff">Auto</text>
<rect x="5.5" y="465" width="606" height="1.6" fill="#a9a53a"/>
<rect x="5.5" y="489" width="606" height="1.6" fill="#a9a53a"/>
<path d="M5,483.5 C9.2,483.6 22.5,483.7 30,484 C37.5,484.3 43.3,485.2 50,485.5 C56.7,485.8 63.3,485.9 70,486 C76.7,486.1 85,485.9 90,486 C95,486.1 95.5,486.2 100,486.6 C104.5,487 109.8,487.9 117,488.3 C124.2,488.7 135.8,489.3 143,489.2 C150.2,489.1 154.3,488.3 160,487.8 C165.7,487.3 171.2,486.2 177,486.1 C182.8,486 190.7,486.9 194.5,487.1 C198.3,487.3 196.2,487 200,487.5 C203.8,488 209.8,489.3 217,490 C224.2,490.7 234.4,491.2 243,491.8 C251.6,492.4 261.5,492.9 268.7,493.5 C275.9,494.1 280.3,494.5 286,495.2 C291.7,495.9 297.8,497.6 303,497.8 C308.2,498 311.8,497.1 317,496.6 C322.2,496.1 326.2,495.6 334,494.9 C341.8,494.2 356.4,493.2 363.6,492.3 C370.8,491.4 372.2,490.3 377.3,489.2 C382.4,488.1 389.1,486.6 394.5,485.7 C399.9,484.8 406.2,484.1 410,484 C413.8,483.9 413.1,485.3 417.2,484.9 C421.3,484.5 428.7,482.4 434.4,481.5 C440.1,480.6 445.2,479.9 451.5,479.2 C457.8,478.5 466.2,477.6 472,477.5 C477.8,477.4 481.3,478.5 486,478.9 C490.7,479.3 494.8,479.1 500,479.7 C505.2,480.3 511.5,481.5 517.2,482.7 C522.9,483.9 529.3,485.5 534.4,486.6 C539.5,487.7 543.7,488.6 548,489.2 C552.3,489.8 555.1,490 560.1,490 C565.1,490 575.2,489.3 578.2,489.2" fill="none" stroke="#1a94cc" stroke-width="1.5" stroke-linecap="round" />
<path d="M5,482.5 C7.5,482.6 15,482.6 20,483 C25,483.4 30,484.4 35,485 C40,485.6 45.8,486 50,486.5 C54.2,487 56.7,488.1 60,488 C63.3,487.9 66.7,486.7 70,486 C73.3,485.3 77,483.8 80,484 C83,484.2 85.5,486.2 88,487 C90.5,487.8 92.2,488.7 95,489 C97.8,489.3 101.3,488.6 105,488.6 C108.7,488.6 110.4,489.1 117,489.2 C123.6,489.3 138.9,489.5 144.7,489.2 C150.4,488.9 148.9,487.8 151.5,487.1 C154.1,486.4 156.6,485.4 160,484.9 C163.4,484.4 168.2,484 172,484 C175.8,484 179.3,484.2 182.5,484.9 C185.7,485.6 188.2,487.4 191,488.3 C193.8,489.2 195.3,489.4 199.6,490 C203.9,490.6 209.8,491.4 217,491.8 C224.2,492.2 234.4,492.2 243,492.6 C251.6,493 263,493.6 268.7,494.3 C274.4,495 273,496.1 277.3,496.6 C281.6,497.1 290.7,497.3 294.5,497.4 C298.3,497.4 296.2,497.2 300,496.9 C303.8,496.6 311.3,496.3 317,495.7 C322.7,495.1 328.8,494.3 334,493.5 C339.2,492.7 343.1,491.6 348,490.9 C352.9,490.2 358.7,490.1 363.6,489.2 C368.5,488.3 373,486.8 377.3,485.7 C381.6,484.6 385.6,483.3 389.3,482.7 C393,482.1 396.5,482 399.7,482.3 C402.9,482.6 405.7,484.2 408.6,484.4 C411.5,484.6 412.9,484.6 417.2,483.7 C421.5,482.8 428.7,480.3 434.4,479.2 C440.1,478.1 445.8,477.6 451.5,477.2 C457.2,476.8 463.5,476.6 468.7,476.8 C473.9,477 478.2,477.6 482.5,478.5 C486.8,479.4 489.9,481 494.5,482 C499.1,483 506.8,483.9 510,484.4 C513.2,484.9 511.7,484.2 513.7,484.9 C515.8,485.5 518.8,487.3 522.3,488.3 C525.8,489.3 530.1,490.3 534.4,490.9 C538.7,491.5 544.3,491.9 548,491.8 C551.7,491.7 553.2,490.4 556.7,490 C560.2,489.6 565.1,489.7 568.7,489.5 C572.3,489.3 576.6,488.8 578.2,488.7" fill="none" stroke="#d8d228" stroke-width="1.4" stroke-linecap="round" />
<text x="614.5" y="482.1" class="axl" textLength="15.6" lengthAdjust="spacingAndGlyphs">Value</text>
<rect x="612.2" y="484.9" width="28" height="7.7" fill="#e6e000"/>
<text x="612.6" y="490.9" class="bx" fill="#3a3000" textLength="11.3" lengthAdjust="spacingAndGlyphs">0.41</text>
<rect x="612.2" y="492.6" width="28" height="8.4" fill="#00c0f0"/>
<text x="612.6" y="499" class="bx" fill="#06305a" textLength="12.7" lengthAdjust="spacingAndGlyphs">-0.26</text>
<rect x="24.8" y="501.6" width="1.1" height="2.2" fill="#d0d0d0"/>
<text x="22.1" y="509.7" class="xl" textLength="6.4" lengthAdjust="spacingAndGlyphs">27</text>
<rect x="47.6" y="501.6" width="1.1" height="2.2" fill="#d0d0d0"/>
<text x="44.9" y="509.7" class="xl" textLength="6.4" lengthAdjust="spacingAndGlyphs">03</text>
<rect x="70.5" y="501.6" width="1.1" height="2.2" fill="#d0d0d0"/>
<text x="67.8" y="509.7" class="xl" textLength="6.4" lengthAdjust="spacingAndGlyphs">10</text>
<rect x="88.7" y="501.6" width="1.1" height="2.2" fill="#d0d0d0"/>
<text x="86" y="509.7" class="xl" textLength="6.4" lengthAdjust="spacingAndGlyphs">18</text>
<rect x="107" y="501.6" width="1.1" height="2.2" fill="#d0d0d0"/>
<text x="104.3" y="509.7" class="xl" textLength="6.4" lengthAdjust="spacingAndGlyphs">24</text>
<rect x="129.9" y="501.6" width="1.1" height="2.2" fill="#d0d0d0"/>
<text x="127.2" y="509.7" class="xl" textLength="6.4" lengthAdjust="spacingAndGlyphs">02</text>
<rect x="148.1" y="501.6" width="1.1" height="2.2" fill="#d0d0d0"/>
<text x="145.4" y="509.7" class="xl" textLength="6.4" lengthAdjust="spacingAndGlyphs">09</text>
<rect x="166.4" y="501.6" width="1.1" height="2.2" fill="#d0d0d0"/>
<text x="163.7" y="509.7" class="xl" textLength="6.4" lengthAdjust="spacingAndGlyphs">15</text>
<rect x="189.3" y="501.6" width="1.1" height="2.2" fill="#d0d0d0"/>
<text x="186.6" y="509.7" class="xl" textLength="6.4" lengthAdjust="spacingAndGlyphs">22</text>
<rect x="212.1" y="501.6" width="1.1" height="2.2" fill="#d0d0d0"/>
<text x="209.4" y="509.7" class="xl" textLength="6.4" lengthAdjust="spacingAndGlyphs">29</text>
<rect x="234.9" y="501.6" width="1.1" height="2.2" fill="#d0d0d0"/>
<text x="232.2" y="509.7" class="xl" textLength="6.4" lengthAdjust="spacingAndGlyphs">05</text>
<rect x="257.8" y="501.6" width="1.1" height="2.2" fill="#d0d0d0"/>
<text x="255.1" y="509.7" class="xl" textLength="6.4" lengthAdjust="spacingAndGlyphs">12</text>
<rect x="280.6" y="501.6" width="1.1" height="2.2" fill="#d0d0d0"/>
<text x="277.9" y="509.7" class="xl" textLength="6.4" lengthAdjust="spacingAndGlyphs">19</text>
<rect x="303.5" y="501.6" width="1.1" height="2.2" fill="#d0d0d0"/>
<text x="300.8" y="509.7" class="xl" textLength="6.4" lengthAdjust="spacingAndGlyphs">26</text>
<rect x="326.3" y="501.6" width="1.1" height="2.2" fill="#d0d0d0"/>
<text x="323.6" y="509.7" class="xl" textLength="6.4" lengthAdjust="spacingAndGlyphs">03</text>
<rect x="340" y="501.6" width="1.1" height="2.2" fill="#d0d0d0"/>
<text x="337.3" y="509.7" class="xl" textLength="6.4" lengthAdjust="spacingAndGlyphs">10</text>
<rect x="362.9" y="501.6" width="1.1" height="2.2" fill="#d0d0d0"/>
<text x="360.2" y="509.7" class="xl" textLength="6.4" lengthAdjust="spacingAndGlyphs">17</text>
<rect x="385.7" y="501.6" width="1.1" height="2.2" fill="#d0d0d0"/>
<text x="383" y="509.7" class="xl" textLength="6.4" lengthAdjust="spacingAndGlyphs">24</text>
<rect x="408.6" y="501.6" width="1.1" height="2.2" fill="#d0d0d0"/>
<text x="405.9" y="509.7" class="xl" textLength="6.4" lengthAdjust="spacingAndGlyphs">31</text>
<rect x="431.4" y="501.6" width="1.1" height="2.2" fill="#d0d0d0"/>
<text x="428.7" y="509.7" class="xl" textLength="6.4" lengthAdjust="spacingAndGlyphs">07</text>
<rect x="454.2" y="501.6" width="1.1" height="2.2" fill="#d0d0d0"/>
<text x="451.5" y="509.7" class="xl" textLength="6.4" lengthAdjust="spacingAndGlyphs">14</text>
<rect x="477.1" y="501.6" width="1.1" height="2.2" fill="#d0d0d0"/>
<text x="474.4" y="509.7" class="xl" textLength="6.4" lengthAdjust="spacingAndGlyphs">21</text>
<rect x="499.9" y="501.6" width="1.1" height="2.2" fill="#d0d0d0"/>
<text x="497.2" y="509.7" class="xl" textLength="6.4" lengthAdjust="spacingAndGlyphs">28</text>
<rect x="522.8" y="501.6" width="1.1" height="2.2" fill="#d0d0d0"/>
<text x="520.1" y="509.7" class="xl" textLength="6.4" lengthAdjust="spacingAndGlyphs">04</text>
<rect x="545.6" y="501.6" width="1.1" height="2.2" fill="#d0d0d0"/>
<text x="542.9" y="509.7" class="xl" textLength="6.4" lengthAdjust="spacingAndGlyphs">11</text>
<rect x="568.5" y="501.6" width="1.1" height="2.2" fill="#d0d0d0"/>
<text x="565.8" y="509.7" class="xl" textLength="6.4" lengthAdjust="spacingAndGlyphs">18</text>
<rect x="591.3" y="501.6" width="1.1" height="2.2" fill="#d0d0d0"/>
<text x="588.6" y="509.7" class="xl" textLength="6.4" lengthAdjust="spacingAndGlyphs">25</text>
<rect x="609.6" y="501.6" width="1.1" height="2.2" fill="#d0d0d0"/>
<text x="606.9" y="509.7" class="xl" textLength="6.4" lengthAdjust="spacingAndGlyphs">02</text>
<rect x="47.3" y="511" width="1.5" height="8.2" fill="#d8d8d8"/>
<rect x="129.6" y="511" width="1.5" height="8.2" fill="#d8d8d8"/>
<rect x="225.7" y="501.6" width="1.1" height="2.2" fill="#d0d0d0"/>
<rect x="225.5" y="511" width="1.5" height="8.2" fill="#d8d8d8"/>
<rect x="326" y="511" width="1.5" height="8.2" fill="#d8d8d8"/>
<rect x="413" y="501.6" width="1.1" height="2.2" fill="#d0d0d0"/>
<rect x="412.8" y="511" width="1.5" height="8.2" fill="#d8d8d8"/>
<rect x="518.1" y="501.6" width="1.1" height="2.2" fill="#d0d0d0"/>
<rect x="517.9" y="511" width="1.5" height="8.2" fill="#d8d8d8"/>
<rect x="609.3" y="511" width="1.5" height="8.2" fill="#d8d8d8"/>
<text x="10" y="517.8" class="ml" textLength="33" lengthAdjust="spacingAndGlyphs">March 2017</text>
<text x="74.8" y="517.8" class="ml" textLength="28.7" lengthAdjust="spacingAndGlyphs">April 2017</text>
<text x="164.6" y="517.8" class="ml" textLength="27.2" lengthAdjust="spacingAndGlyphs">May 2017</text>
<text x="262.1" y="517.8" class="ml" textLength="28.7" lengthAdjust="spacingAndGlyphs">June 2017</text>
<text x="356.4" y="517.8" class="ml" textLength="27.5" lengthAdjust="spacingAndGlyphs">July 2017</text>
<text x="448.3" y="517.8" class="ml" textLength="35.6" lengthAdjust="spacingAndGlyphs">August 2017</text>
<text x="540.5" y="517.8" class="ml" textLength="47.5" lengthAdjust="spacingAndGlyphs">September 2017</text>
<text x="2.8" y="7.7" class="lg" fill="#d8d8d8" style="font-size:7px" textLength="40.9" lengthAdjust="spacingAndGlyphs">Daily BKOM.PR</text>
<text x="567.7" y="7.1" class="lgn" fill="#d0d0dc" style="font-size:6.8px" textLength="71.6" lengthAdjust="spacingAndGlyphs">3/21/2017 - 10/2/2017 (PRG)</text>
<text x="15.6" y="18.9" class="lg" fill="#f0a020" style="font-size:7px" textLength="181" lengthAdjust="spacingAndGlyphs">Cndl, BKOM.PR, Trade Price, 9/20/2017, 980.00, 985.00, 973.70, 980.00,</text>
<text x="199.7" y="18.9" class="lg" fill="#e83030" style="font-size:7px" textLength="40.1" lengthAdjust="spacingAndGlyphs">-4.90, (-0.50%),</text>
<text x="247.6" y="18.9" class="lg" fill="#b03ae0" style="font-size:7px" textLength="144.9" lengthAdjust="spacingAndGlyphs">EMA, BKOM.PR, Trade Price(Last),&#160; 50, 9/20/2017, 972.49,</text>
<text x="400.5" y="18.9" class="lg" fill="#6ad020" style="font-size:7px" textLength="145.5" lengthAdjust="spacingAndGlyphs">EMA, BKOM.PR, Trade Price(Last),&#160; 200, 9/20/2017, 946.65,</text>
<text x="15.6" y="25.6" class="lg" fill="#2a90e0" style="font-size:7px" textLength="142.2" lengthAdjust="spacingAndGlyphs">EMA, BKOM.PR, Trade Price(Last),&#160; 20, 9/20/2017, 978.52</text>
<text x="15.5" y="377.8" class="lg" fill="#e8442a" style="font-size:7px" textLength="186.7" lengthAdjust="spacingAndGlyphs">RSI, BKOM.PR, Trade Price(Last),&#160; 14, Wilder Smoothing, 9/20/2017, 51.187</text>
<text x="15" y="473.3" class="lg" fill="#e0d820" style="font-size:7px" textLength="190.6" lengthAdjust="spacingAndGlyphs">MACD, BKOM.PR, Trade Price(Last),&#160; 12, 26, 9, Exponential, 9/20/2017, 0.41,</text>
<text x="207.5" y="473.3" class="lg" fill="#20a8e8" style="font-size:7px" textLength="13.4" lengthAdjust="spacingAndGlyphs">-0.26</text>
</svg></div>
</body></html>
